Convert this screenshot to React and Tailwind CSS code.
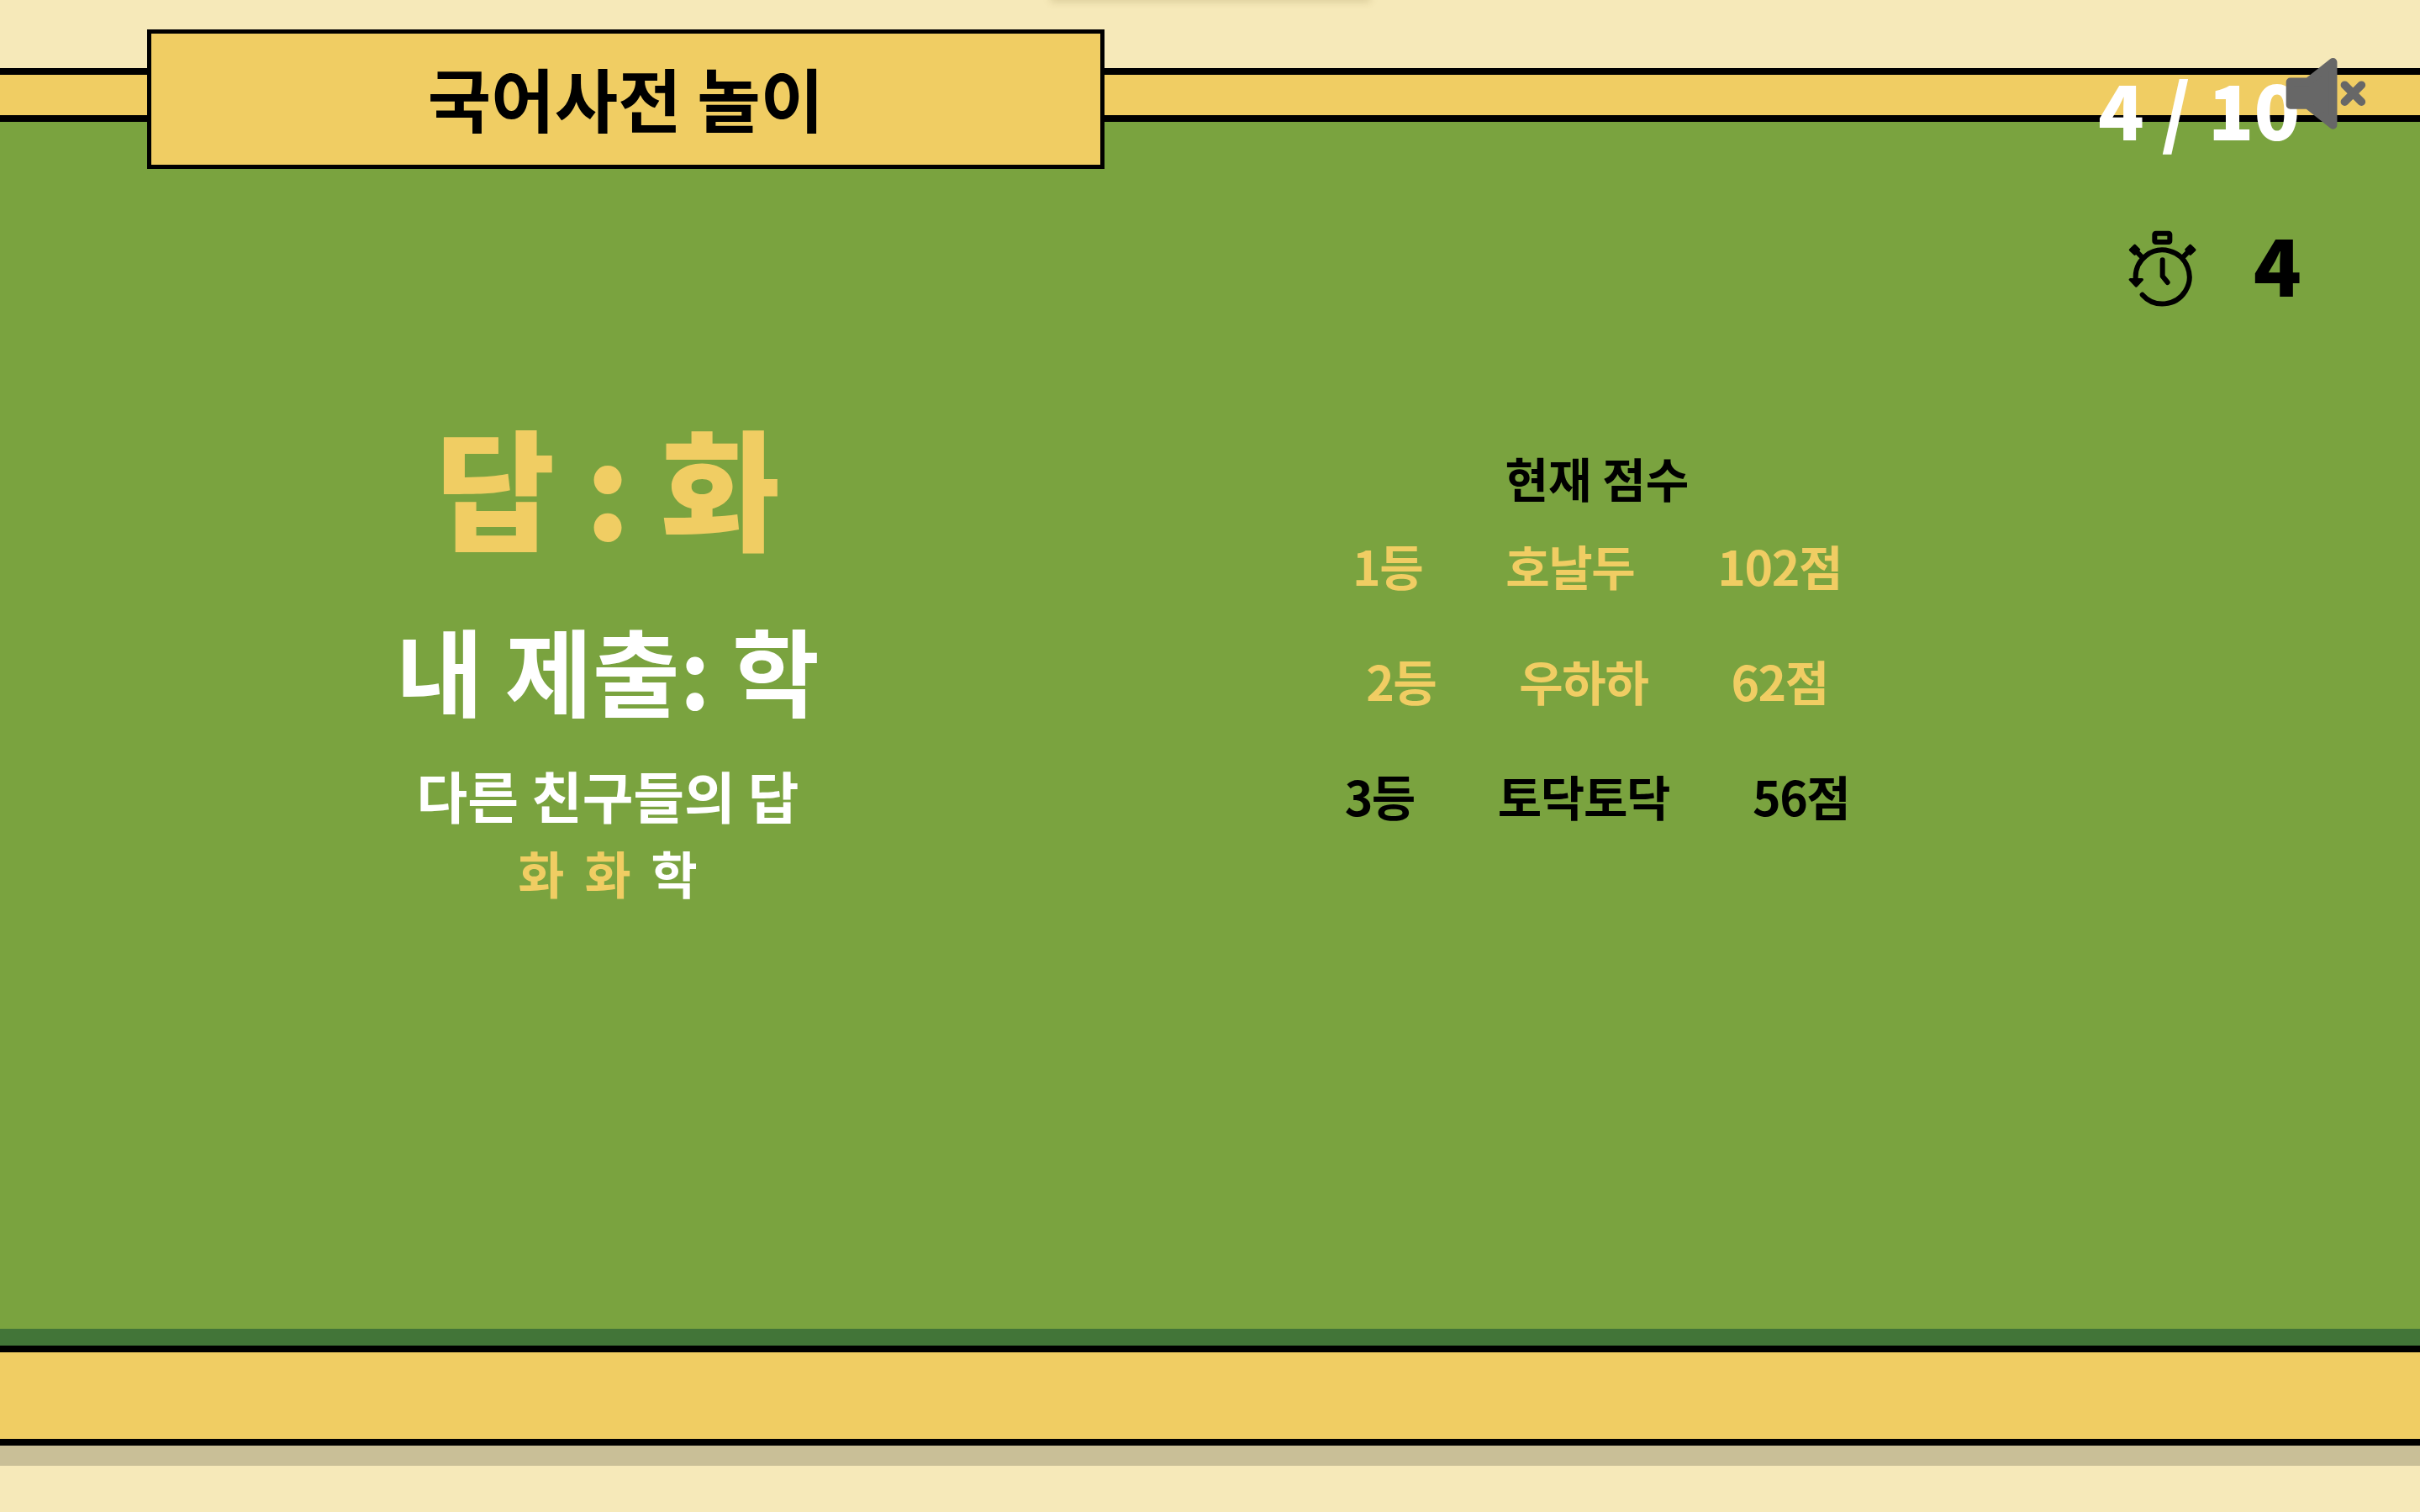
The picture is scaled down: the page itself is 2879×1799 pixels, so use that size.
const rows = [
  { rank: '1등', name: '호날두', score: '102점', color: 'text-[#f0cd63]' },
  { rank: '2등', name: '우하하', score: '62점', color: 'text-[#f0cd63]' },
  { rank: '3등', name: '토닥토닥', score: '56점', color: 'text-black' },
]

function TimerIcon() {
  return (
    <svg viewBox="390 725 255 285" className="w-[85px] h-[95px]" fill="none" stroke="black" strokeWidth="18" strokeLinecap="round" strokeLinejoin="round">
      <path d="M443 958 A96 96 0 1 0 419 897" />
      <path d="M400 904 H442 L421 926 Z" fill="black" strokeWidth="10" />
      <rect x="487" y="739" width="54" height="31" rx="4" strokeWidth="18" />
      <path d="M515 834 V892 L533 914" />
      <path d="M440 822 L416 797" />
      <path d="M590 822 L614 797" />
      <path d="M400 798 L416 782 L431 797 L416 813 Z" fill="black" strokeWidth="9" />
      <path d="M630 798 L614 782 L599 797 L614 813 Z" fill="black" strokeWidth="9" />
    </svg>
  )
}

function MutedIcon() {
  return (
    <svg viewBox="955 112 295 262" className="w-[98px] h-[87px]">
      <path d="M975 201 H1038 L1128 130 V355 L1038 283 H975 Z" fill="#676767" stroke="#676767" strokeWidth="30" strokeLinejoin="round" />
      <path d="M1170 212 L1230 272 M1230 212 L1170 272" stroke="#676767" strokeWidth="29" strokeLinecap="round" />
    </svg>
  )
}

export default function App() {
  return (
    <div className="relative h-[1799px] overflow-hidden flex flex-col bg-[#f6e9b9] font-['Noto_Sans_CJK_KR','Noto_Sans',sans-serif]">
      {/* cut off shadow at the very top */}
      <div className="absolute left-[1250px] -top-[10px] w-[380px] h-[10px] shadow-[0_2px_10px_rgba(120,100,40,0.22)]" />

      {/* top band */}
      <div className="relative mt-[81px] h-[64px] border-y-[8px] border-black bg-[#f0cd63]">
        <div className="absolute left-[175px] -top-[54px] w-[1139px] h-[166px] border-[5px] border-black bg-[#f0cd63] flex items-center justify-center text-[82px] font-bold text-black pb-[6px]">
          국어사전 놀이
        </div>
        <div className="absolute left-[2496px] top-[-16px] text-[90px] leading-[110px] font-black text-white whitespace-nowrap">
          4 / 10
        </div>
        <div className="absolute left-[2718px] -top-[21px]">
          <MutedIcon />
        </div>
      </div>

      {/* board */}
      <main className="shrink-0 bg-[#7aa33f] border-b-[20px] border-[#427538] h-[1456px] flex flex-col">
        <div className="flex items-center justify-end pt-[128px] pr-[141px] gap-[65px]">
          <TimerIcon />
          <span className="text-[94px] leading-[95px] font-black text-black -translate-y-[8px]">4</span>
        </div>

        <div className="flex mt-[118px]">
          <section className="w-[1446px] flex flex-col items-center">
            <div className="text-[155px] leading-[180px] font-black text-[#f0cd63] whitespace-nowrap">답 : 화</div>
            <div className="mt-[64px] text-[113px] leading-[130px] font-bold text-white whitespace-nowrap">내 제출: 학</div>
            <div className="mt-[40px] text-[66px] leading-[90px] font-bold text-white whitespace-nowrap">다른 친구들의 답</div>
            <div className="mt-[8px] flex gap-[24px] text-[60px] leading-[80px] font-bold">
              <span className="text-[#f0cd63]">화</span>
              <span className="text-[#f0cd63]">화</span>
              <span className="text-white">학</span>
            </div>
          </section>

          <section className="w-[908px] flex flex-col items-center pt-[50px]">
            <div className="text-[56px] leading-[64px] font-bold text-black whitespace-nowrap">현재 점수</div>
            <div className="mt-[37px] flex flex-col items-center gap-[67px]">
              {rows.map((r) => (
                <div key={r.rank} className={`flex gap-[99px] text-[57px] leading-[70px] font-bold tracking-tight whitespace-nowrap ${r.color}`}>
                  <span>{r.rank}</span>
                  <span>{r.name}</span>
                  <span>{r.score}</span>
                </div>
              ))}
            </div>
          </section>
        </div>
      </main>

      {/* bottom band */}
      <div className="shrink-0 h-[119px] border-y-[8px] border-black bg-[#f0cd63]" />
      <div className="shrink-0 h-[24px] bg-[#c9bf97]" />
    </div>
  )
}
